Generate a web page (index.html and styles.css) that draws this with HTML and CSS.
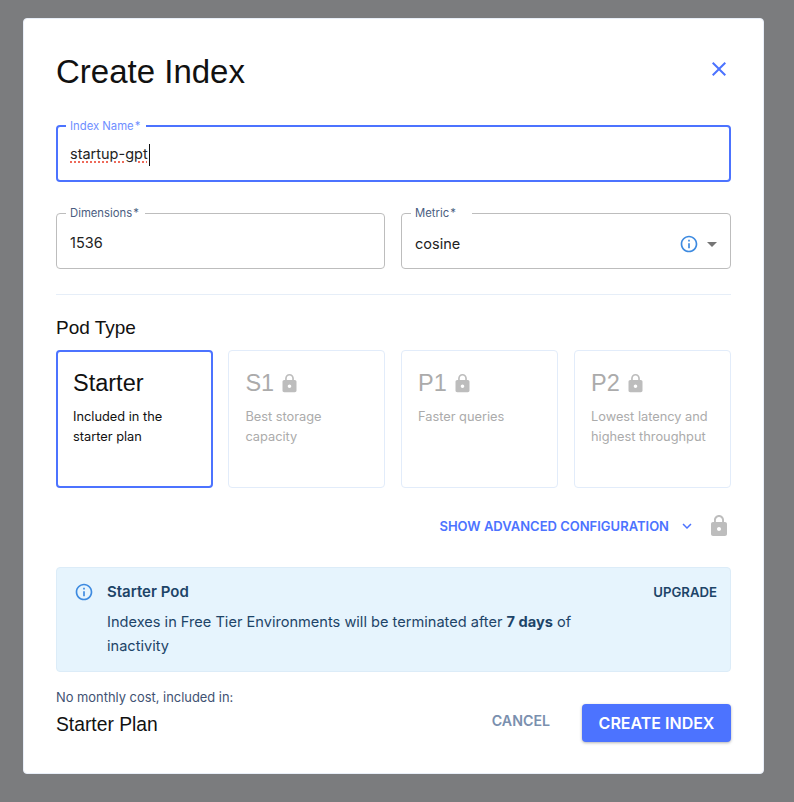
FILE: index.html
```html
<!DOCTYPE html>
<html lang="en">
<head>
  <meta charset="UTF-8">
  <title>Create Index</title>
  <link rel="stylesheet" href="styles.css">
</head>
<body>
  <div class="modal">
    <div class="modal-head">
      <h1>Create Index</h1>
      <svg class="close-icon" width="24" height="24" viewBox="0 0 24 24"><path d="M19 6.41 17.59 5 12 10.59 6.41 5 5 6.41 10.59 12 5 17.59 6.41 19 12 13.41 17.59 19 19 17.59 13.41 12z"/></svg>
    </div>

    <fieldset class="field field-focus">
      <legend>Index Name&#8202;*</legend>
      <span class="field-value"><span class="typo">startup-gpt</span><span class="caret"></span></span>
    </fieldset>

    <div class="field-row">
      <fieldset class="field">
        <legend>Dimensions&#8202;*</legend>
        <span class="field-value">1536</span>
      </fieldset>
      <fieldset class="field">
        <legend class="legend-wide">Metric&#8202;*</legend>
        <span class="field-value metric">cosine</span>
        <svg class="info-icon" width="20" height="20" viewBox="0 0 24 24"><path d="M11 7h2v2h-2zm0 4h2v6h-2zm1-9C6.48 2 2 6.48 2 12s4.48 10 10 10 10-4.48 10-10S17.52 2 12 2zm0 18c-4.41 0-8-3.59-8-8s3.59-8 8-8 8 3.59 8 8-3.59 8-8 8z"/></svg>
        <svg class="arrow-icon" width="24" height="24" viewBox="0 0 24 24"><path d="M7 10l5 5 5-5z"/></svg>
      </fieldset>
    </div>

    <hr class="divider">

    <h2>Pod Type</h2>
    <div class="pods">
      <div class="pod pod-active">
        <div class="pod-name">Starter</div>
        <p>Included in the starter plan</p>
      </div>
      <div class="pod">
        <div class="pod-name">S1 <svg class="lock-icon" width="21" height="21" viewBox="0 0 24 24"><path d="M18 8h-1V6c0-2.76-2.24-5-5-5S7 3.24 7 6v2H6c-1.1 0-2 .9-2 2v10c0 1.1.9 2 2 2h12c1.1 0 2-.9 2-2V10c0-1.1-.9-2-2-2zm-6 9c-1.1 0-2-.9-2-2s.9-2 2-2 2 .9 2 2-.9 2-2 2zm3.1-9H8.9V6c0-1.71 1.39-3.1 3.1-3.1s3.1 1.39 3.1 3.1v2z"/></svg></div>
        <p>Best storage capacity</p>
      </div>
      <div class="pod">
        <div class="pod-name">P1 <svg class="lock-icon" width="21" height="21" viewBox="0 0 24 24"><path d="M18 8h-1V6c0-2.76-2.24-5-5-5S7 3.24 7 6v2H6c-1.1 0-2 .9-2 2v10c0 1.1.9 2 2 2h12c1.1 0 2-.9 2-2V10c0-1.1-.9-2-2-2zm-6 9c-1.1 0-2-.9-2-2s.9-2 2-2 2 .9 2 2-.9 2-2 2zm3.1-9H8.9V6c0-1.71 1.39-3.1 3.1-3.1s3.1 1.39 3.1 3.1v2z"/></svg></div>
        <p>Faster queries</p>
      </div>
      <div class="pod">
        <div class="pod-name">P2 <svg class="lock-icon" width="21" height="21" viewBox="0 0 24 24"><path d="M18 8h-1V6c0-2.76-2.24-5-5-5S7 3.24 7 6v2H6c-1.1 0-2 .9-2 2v10c0 1.1.9 2 2 2h12c1.1 0 2-.9 2-2V10c0-1.1-.9-2-2-2zm-6 9c-1.1 0-2-.9-2-2s.9-2 2-2 2 .9 2 2-.9 2-2 2zm3.1-9H8.9V6c0-1.71 1.39-3.1 3.1-3.1s3.1 1.39 3.1 3.1v2z"/></svg></div>
        <p>Lowest latency and highest throughput</p>
      </div>
    </div>

    <div class="advanced">
      <span class="advanced-label">SHOW ADVANCED CONFIGURATION</span>
      <svg class="chevron-icon" width="18" height="18" viewBox="0 0 24 24"><path d="M7.41 8.59 12 13.17l4.59-4.58L18 10l-6 6-6-6z"/></svg>
      <svg class="lock-icon lock-big" width="24" height="24" viewBox="0 0 24 24"><path d="M18 8h-1V6c0-2.76-2.24-5-5-5S7 3.24 7 6v2H6c-1.1 0-2 .9-2 2v10c0 1.1.9 2 2 2h12c1.1 0 2-.9 2-2V10c0-1.1-.9-2-2-2zm-6 9c-1.1 0-2-.9-2-2s.9-2 2-2 2 .9 2 2-.9 2-2 2zm3.1-9H8.9V6c0-1.71 1.39-3.1 3.1-3.1s3.1 1.39 3.1 3.1v2z"/></svg>
    </div>

    <div class="alert">
      <svg class="info-icon" width="20" height="20" viewBox="0 0 24 24"><path d="M11 7h2v2h-2zm0 4h2v6h-2zm1-9C6.48 2 2 6.48 2 12s4.48 10 10 10 10-4.48 10-10S17.52 2 12 2zm0 18c-4.41 0-8-3.59-8-8s3.59-8 8-8 8 3.59 8 8-3.59 8-8 8z"/></svg>
      <div class="alert-body">
        <div class="alert-title">Starter Pod</div>
        <p>Indexes in Free Tier Environments will be terminated after <b>7 days</b> of inactivity</p>
      </div>
      <span class="alert-action">UPGRADE</span>
    </div>

    <div class="modal-foot">
      <div class="cost">
        <div class="cost-note">No monthly cost, included in:</div>
        <div class="cost-plan">Starter Plan</div>
      </div>
      <span class="cancel">CANCEL</span>
      <button class="create">CREATE INDEX</button>
    </div>
  </div>
</body>
</html>
```

FILE: styles.css
```css
* {
  box-sizing: border-box;
}
body {
  margin: 0;
  height: 802px;
  background-color: #7b7c7e;
  color: #111;
  font-family: "Inter", "Liberation Sans", sans-serif;
  overflow: hidden;
}
.modal {
  width: 741px;
  height: 756px;
  margin: 18px 0 0 23px;
  padding: 33px 32px 0;
  background-color: white;
  border-radius: 4px;
  border: 1px solid #e8eef8;
}
.modal-head {
  display: flex;
  justify-content: space-between;
  align-items: center;
  height: 40px;
  margin-bottom: 34px;
}
h1 {
  margin: 0;
  font-family: "Liberation Sans", sans-serif;
  font-size: 33px;
  font-weight: 400;
}
.close-icon {
  fill: #4c73ff;
  margin: -6px 0 0 0;
}

.field {
  position: relative;
  display: flex;
  align-items: center;
  width: 100%;
  height: 62px;
  min-width: 0;
  margin: -6px 0 0;
  padding: 0 12px;
  border: 1px solid #bdbdbd;
  border-radius: 4px;
}
.field legend {
  margin-left: -3px;
  padding: 0 6px 0 4px;
  height: 12px;
  font-size: 11.3px;
  line-height: 12px;
  color: #4a5d80;
}
.field .legend-wide {
  padding-right: 16px;
}
.field-focus {
  border: 2px solid #4c73ff;
  padding: 0 11px;
}
.field-focus legend {
  color: #6f8fff;
}
.field-value {
  margin-top: -2px;
  font-size: 14.5px;
  padding-left: 1px;
  color: #222;
}
.typo {
  text-decoration: underline dotted #ee6a5a 2px;
  text-underline-offset: 3px;
}
.caret {
  display: inline-block;
  width: 1px;
  height: 22px;
  margin-left: 1px;
  background-color: #111;
  vertical-align: middle;
}
.field-row {
  display: grid;
  grid-template-columns: 329px 330px;
  gap: 16px;
  margin-top: 31px;
}
.metric {
  flex: 1;
  margin-top: 0;
}
.field .info-icon {
  fill: #3d8ae0;
  margin-right: 1px;
}
.arrow-icon {
  fill: #757575;
  margin-right: -6px;
}

.divider {
  height: 1px;
  margin: 25px 0 0;
  border: none;
  background-color: #e6eef8;
}
h2 {
  margin: 22px 0 11px;
  font-family: "Liberation Sans", sans-serif;
  font-size: 19px;
  line-height: 22px;
  font-weight: 400;
}
.pods {
  display: grid;
  grid-template-columns: 156.4px 156.6px 157px 157px;
  gap: 16px;
}
.pod {
  height: 138px;
  padding: 19px 16px;
  border: 1px solid #e2ecfa;
  border-radius: 4px;
  color: #ababab;
}
.pod-active {
  margin-right: -1px;
  border: 2px solid #4c73ff;
  padding: 18px 15px;
  color: #111;
}
.pod-name {
  display: flex;
  align-items: center;
  gap: 5px;
  height: 26px;
  font-family: "Liberation Sans", sans-serif;
  font-size: 23.5px;
}
.pod p {
  margin: 11px 0 0;
  font-size: 12.8px;
  line-height: 20px;
}
.lock-icon {
  fill: #bdbdbd;
}

.advanced {
  display: flex;
  justify-content: flex-end;
  align-items: center;
  gap: 8px;
  height: 24px;
  margin-top: 26px;
}
.advanced-label {
  margin-right: 1px;
  font-size: 13px;
  font-weight: 600;
  color: #4c73ff;
}
.chevron-icon {
  fill: #4c73ff;
}
.lock-big {
  margin-left: 3px;
}

.alert {
  display: flex;
  align-items: flex-start;
  height: 105px;
  margin-top: 29px;
  padding: 14px 13px 0 17px;
  background-color: #e6f4fd;
  border: 1px solid #dcecf8;
  border-radius: 4px;
  color: #1d4468;
}
.alert .info-icon {
  fill: #3d8ae0;
  margin-right: 13px;
}
.alert-body {
  width: 500px;
}
.alert-title {
  font-size: 15px;
  font-weight: 600;
  line-height: 20px;
}
.alert-body p {
  margin: 8px 0 0;
  font-size: 14.6px;
  line-height: 24px;
}
.alert-action {
  margin-left: auto;
  font-size: 13.2px;
  font-weight: 600;
  line-height: 20px;
}

.modal-foot {
  display: flex;
  align-items: flex-start;
  margin-top: 16px;
}
.cost {
  flex: 1;
}
.cost-note {
  font-size: 12.9px;
  line-height: 20px;
  color: #3f5273;
}
.cost-plan {
  margin-top: 5px;
  font-family: "Liberation Sans", sans-serif;
  font-size: 19.3px;
  line-height: 24px;
}
.cancel {
  margin: 23px 32px 0 0;
  font-size: 14.2px;
  line-height: 20px;
  font-weight: 600;
  color: #7a8fae;
}
.create {
  width: 149px;
  height: 38px;
  margin-top: 16px;
  padding: 0;
  border: none;
  border-radius: 4px;
  background-color: #4c73ff;
  box-shadow: 0 1px 3px rgba(0, 0, 0, 0.3);
  color: white;
  font-family: inherit;
  font-size: 16px;
  font-weight: 600;
}
```
